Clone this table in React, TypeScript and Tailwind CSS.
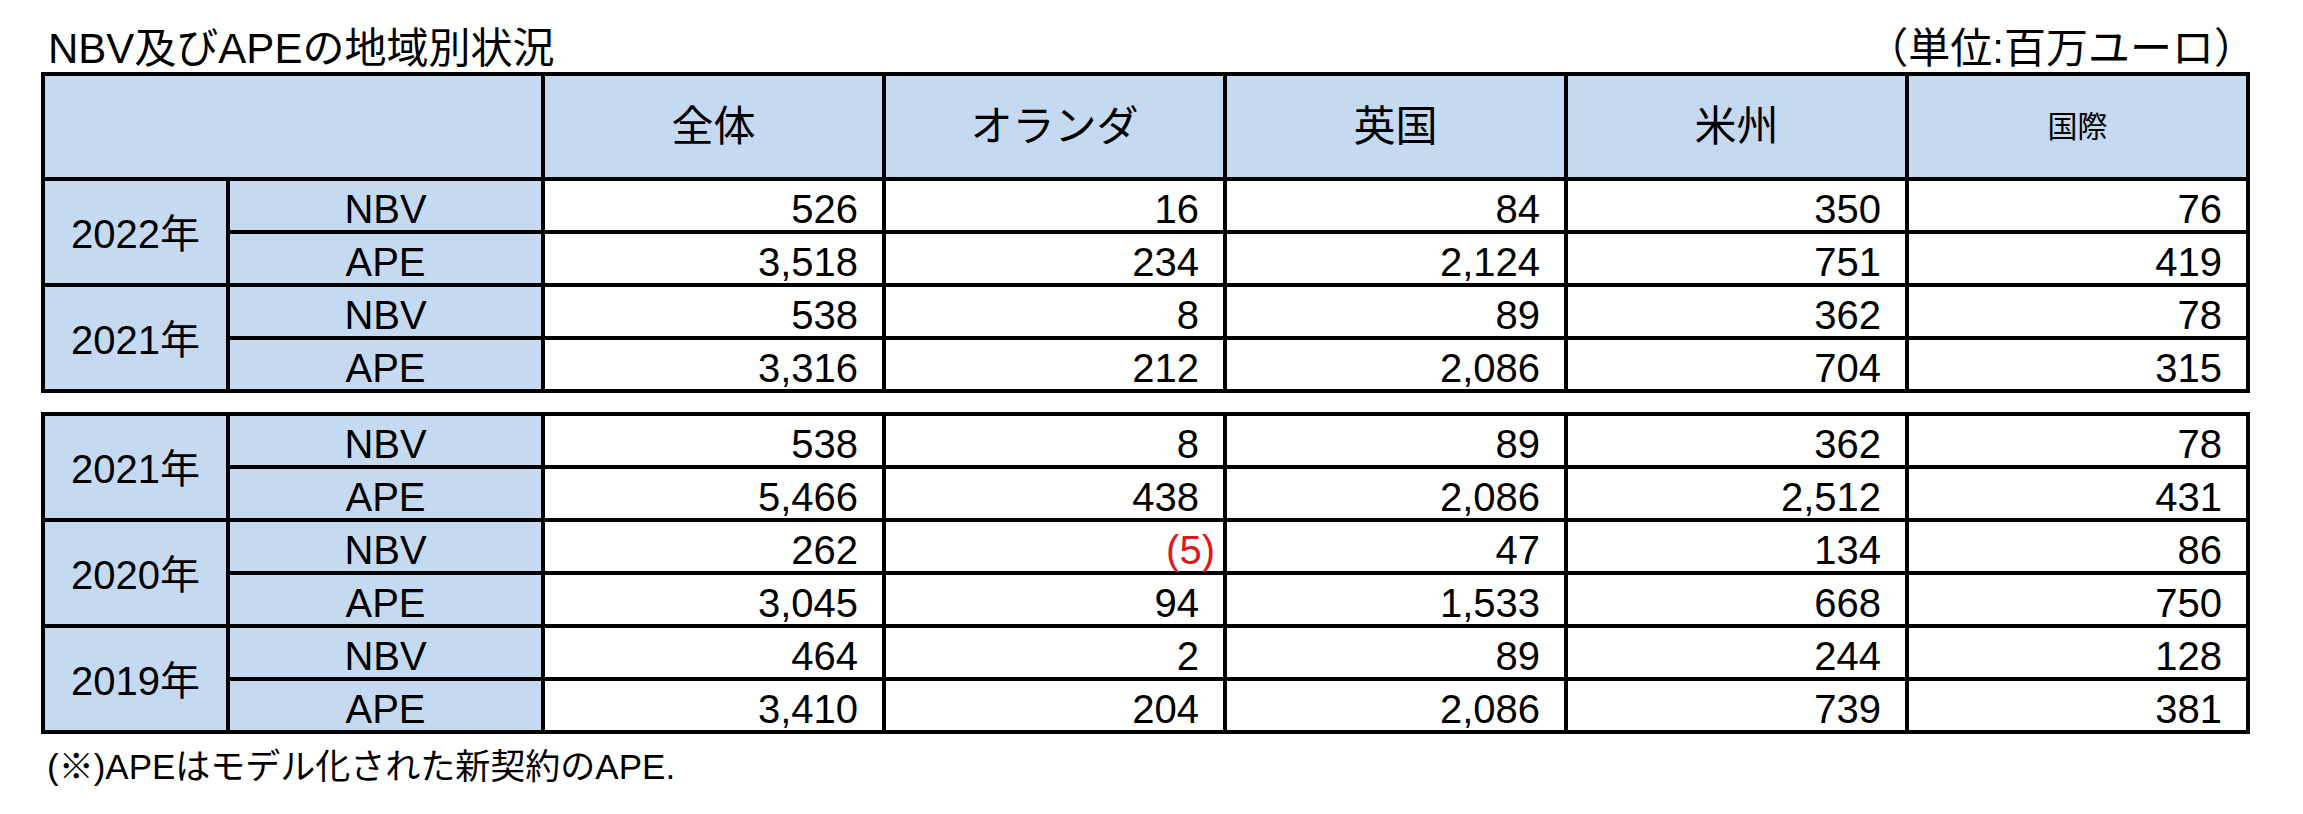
const font = "font-['Liberation_Sans','Noto_Sans_CJK_JP',sans-serif]"

type Row = { year: string; nbv: string[]; ape: string[] }

const top: Row[] = [
  { year: "2022年", nbv: ["526", "16", "84", "350", "76"], ape: ["3,518", "234", "2,124", "751", "419"] },
  { year: "2021年", nbv: ["538", "8", "89", "362", "78"], ape: ["3,316", "212", "2,086", "704", "315"] },
]

const bottom: Row[] = [
  { year: "2021年", nbv: ["538", "8", "89", "362", "78"], ape: ["5,466", "438", "2,086", "2,512", "431"] },
  { year: "2020年", nbv: ["262", "(5)", "47", "134", "86"], ape: ["3,045", "94", "1,533", "668", "750"] },
  { year: "2019年", nbv: ["464", "2", "89", "244", "128"], ape: ["3,410", "204", "2,086", "739", "381"] },
]

const headers = ["全体", "オランダ", "英国", "米州"]

function Num({ v }: { v: string }) {
  const neg = v.startsWith("(")
  return (
    <div
      className={`flex items-center justify-end border-r-4 border-b-4 border-black bg-white pt-[6px] text-[40px] ${
        neg ? "pr-[8px] text-[#e3141b]" : "pr-[24px] text-black"
      }`}
    >
      {v}
    </div>
  )
}

function YearBlock({ row }: { row: Row }) {
  return (
    <>
      <div className="row-span-2 flex items-center justify-center border-r-4 border-b-4 border-black bg-[#c5d9f1] pt-[4px] text-[40px]">
        {row.year}
      </div>
      <div className="flex items-center justify-center border-r-4 border-b-4 border-black bg-[#c5d9f1] pt-[6px] text-[40px]">
        NBV
      </div>
      {row.nbv.map((v, i) => (
        <Num key={"n" + i} v={v} />
      ))}
      <div className="flex items-center justify-center border-r-4 border-b-4 border-black bg-[#c5d9f1] pt-[6px] text-[40px]">
        APE
      </div>
      {row.ape.map((v, i) => (
        <Num key={"a" + i} v={v} />
      ))}
    </>
  )
}

export default function App() {
  return (
    <div className={`h-[814px] w-[2303px] bg-white pl-[41px] text-black ${font}`}>
      <div className="flex h-[72px] w-[2209px] items-end justify-between pb-[2px]">
        <div className="pl-[7px] text-[42px] leading-none">NBV及びAPEの地域別状況</div>
        <div className="-mr-[6px] text-[42px] leading-none">（単位:百万ユーロ）</div>
      </div>

      <div className="grid w-[2209px] grid-cols-[185px_315px_repeat(5,341px)] grid-rows-[105px_repeat(4,53px)] border-t-4 border-l-4 border-black">
        <div className="col-span-2 border-r-4 border-b-4 border-black bg-[#c5d9f1]" />
        {headers.map((h) => (
          <div
            key={h}
            className="flex items-center justify-center border-r-4 border-b-4 border-black bg-[#c5d9f1] text-[42px]"
          >
            {h}
          </div>
        ))}
        <div className="flex items-center justify-center border-r-4 border-b-4 border-black bg-[#c5d9f1] text-[30px]">
          国際
        </div>
        {top.map((r) => (
          <YearBlock key={r.year} row={r} />
        ))}
      </div>

      <div className="mt-[19px] grid w-[2209px] grid-cols-[185px_315px_repeat(5,341px)] grid-rows-[repeat(6,53px)] border-t-4 border-l-4 border-black">
        {bottom.map((r) => (
          <YearBlock key={r.year} row={r} />
        ))}
      </div>

      <p className="pt-[15px] pl-[6px] text-[35px] leading-none">(※)APEはモデル化された新契約のAPE.</p>
    </div>
  )
}
